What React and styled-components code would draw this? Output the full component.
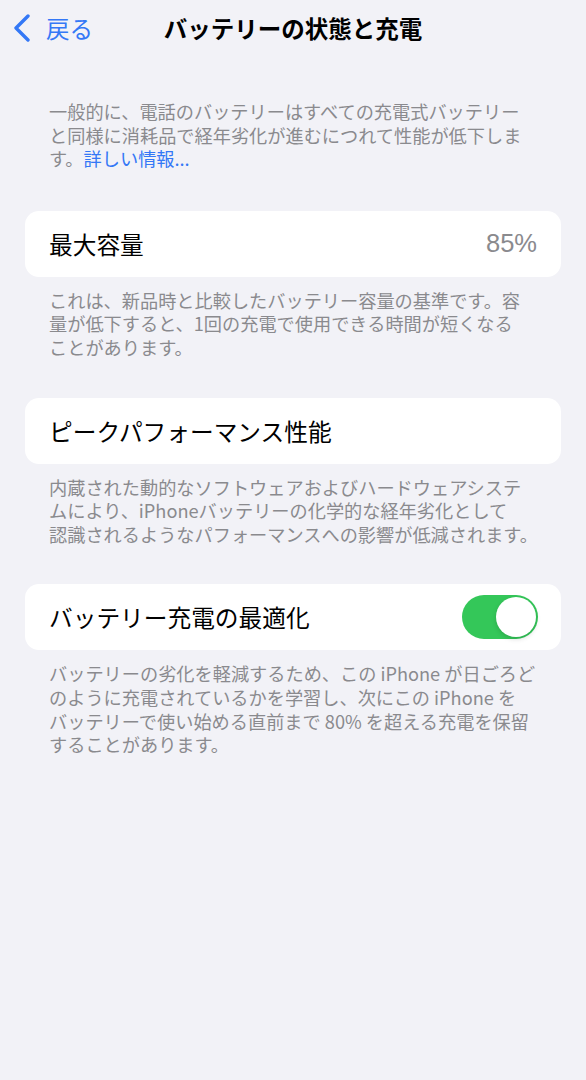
import React, { useState } from 'react';
import styled, { createGlobalStyle } from 'styled-components';

const GlobalStyle = createGlobalStyle`
  html, body {
    margin: 0;
    padding: 0;
    background: #f2f2f7;
  }
  body {
    font-family: "Noto Sans CJK JP", "Noto Sans", sans-serif;
    -webkit-font-smoothing: antialiased;
  }
`;

const Page = styled.div`
  width: 586px;
  min-height: 1080px;
  background: #f2f2f7;
  color: #000;
`;

const NavBar = styled.div`
  height: 56px;
  display: grid;
  grid-template-columns: 1fr auto 1fr;
  align-items: center;
`;

const BackButton = styled.button`
  display: flex;
  align-items: center;
  gap: 15px;
  padding: 0 0 0 13px;
  border: none;
  background: none;
  color: #3478f6;
  font-family: inherit;
  font-size: 23.5px;
  cursor: pointer;
  justify-self: start;
`;

const Title = styled.div`
  font-size: 23.5px;
  font-weight: 700;
`;

const Note = styled.p`
  margin: 0;
  padding: ${p => (p.$intro ? '44px 20px 0 49px' : '12px 20px 0 49px')};
  font-size: 18.2px;
  line-height: 23.6px;
  color: #8a8a8e;
  white-space: nowrap;
`;

const Link = styled.a`
  color: #3478f6;
  text-decoration: none;
`;

const Card = styled.div`
  margin: ${p => p.$top}px 25px 0;
  height: 66px;
  border-radius: 14px;
  background: #fff;
  display: flex;
  align-items: center;
  justify-content: space-between;
  padding: 0 23px 0 24px;
`;

const Label = styled.span`
  font-size: 23.7px;
`;

const Value = styled.span`
  font-family: "Liberation Sans", Arial, sans-serif;
  font-size: 25.5px;
  color: #8a8a8e;
  margin-right: 1px;
`;

const Track = styled.button`
  position: relative;
  width: 76px;
  height: 44px;
  border: none;
  padding: 0;
  border-radius: 22px;
  background: ${p => (p.$on ? '#34c759' : '#e9e9eb')};
  cursor: pointer;
  transition: background 0.2s;
`;

const Thumb = styled.span`
  position: absolute;
  top: 2px;
  left: ${p => (p.$on ? '34px' : '2px')};
  width: 40px;
  height: 40px;
  border-radius: 50%;
  background: #fff;
  box-shadow: 0 2px 5px rgba(0, 0, 0, 0.15);
  transition: left 0.2s;
`;

const Chevron = () => (
  <svg width="18" height="28" viewBox="0 0 18 28" fill="none">
    <path d="M15 2 L3 14 L15 26" stroke="currentColor" strokeWidth="3.4" strokeLinecap="round" strokeLinejoin="round" />
  </svg>
);

export default function App() {
  const [optimized, setOptimized] = useState(true);

  return (
    <Page>
      <GlobalStyle />
      <NavBar>
        <BackButton>
          <Chevron />
          戻る
        </BackButton>
        <Title>バッテリーの状態と充電</Title>
        <span />
      </NavBar>

      <Note $intro>
        一般的に、電話のバッテリーはすべての充電式バッテリー<br />
        と同様に消耗品で経年劣化が進むにつれて性能が低下しま<br />
        す。<Link href="#">詳しい情報...</Link>
      </Note>

      <Card $top={40}>
        <Label>最大容量</Label>
        <Value>85%</Value>
      </Card>
      <Note>
        これは、新品時と比較したバッテリー容量の基準です。容<br />
        量が低下すると、1回の充電で使用できる時間が短くなる<br />
        ことがあります。
      </Note>

      <Card $top={38}>
        <Label>ピークパフォーマンス性能</Label>
      </Card>
      <Note>
        内蔵された動的なソフトウェアおよびハードウェアシステ<br />
        ムにより、iPhoneバッテリーの化学的な経年劣化として<br />
        認識されるようなパフォーマンスへの影響が低減されます。
      </Note>

      <Card $top={38}>
        <Label>バッテリー充電の最適化</Label>
        <Track $on={optimized} onClick={() => setOptimized(!optimized)}>
          <Thumb $on={optimized} />
        </Track>
      </Card>
      <Note>
        バッテリーの劣化を軽減するため、この iPhone が日ごろど<br />
        のように充電されているかを学習し、次にこの iPhone を<br />
        バッテリーで使い始める直前まで 80% を超える充電を保留<br />
        することがあります。
      </Note>
    </Page>
  );
}
